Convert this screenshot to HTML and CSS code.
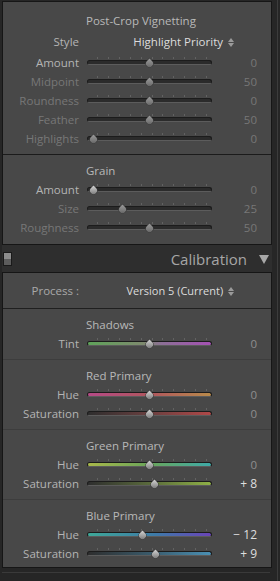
FILE: index.html
```html
<!DOCTYPE html>
<html lang="en">
<head>
    <meta charset="UTF-8">
    <meta name="viewport" content="width=device-width, initial-scale=1.0">
    <title>Develop - Effects / Calibration</title>
    <link rel="stylesheet" href="styles.css">
</head>
<body>
<div class="app">
    <div class="main">
        <div class="panel">
            <div class="group first">
                <div class="title">Post-Crop Vignetting</div>
                <div class="row pick">
                    <span class="label">Style</span>
                    <span class="choice">Highlight Priority
                        <svg class="updown" width="6" height="9" viewBox="0 0 6 9"><path d="M0 4 L3 0 L6 4 Z M0 5 L3 9 L6 5 Z"/></svg>
                    </span>
                </div>
                <div class="row">
                    <span class="label">Amount</span>
                    <div class="slider"><i class="thumb dim" style="left: 50%"></i></div>
                    <span class="value dim">0</span>
                </div>
                <div class="row">
                    <span class="label dim">Midpoint</span>
                    <div class="slider"><i class="thumb dim" style="left: 50%"></i></div>
                    <span class="value dim">50</span>
                </div>
                <div class="row">
                    <span class="label dim">Roundness</span>
                    <div class="slider"><i class="thumb dim" style="left: 50%"></i></div>
                    <span class="value dim">0</span>
                </div>
                <div class="row">
                    <span class="label dim">Feather</span>
                    <div class="slider"><i class="thumb dim" style="left: 50%"></i></div>
                    <span class="value dim">50</span>
                </div>
                <div class="row">
                    <span class="label dim">Highlights</span>
                    <div class="slider"><i class="thumb dim" style="left: 5%"></i></div>
                    <span class="value dim">0</span>
                </div>
            </div>
            <div class="group grain">
                <div class="title">Grain</div>
                <div class="row">
                    <span class="label">Amount</span>
                    <div class="slider"><i class="thumb" style="left: 5%"></i></div>
                    <span class="value dim">0</span>
                </div>
                <div class="row">
                    <span class="label dim">Size</span>
                    <div class="slider"><i class="thumb dim" style="left: 28.5%"></i></div>
                    <span class="value dim">25</span>
                </div>
                <div class="row">
                    <span class="label dim">Roughness</span>
                    <div class="slider"><i class="thumb dim" style="left: 50%"></i></div>
                    <span class="value dim">50</span>
                </div>
            </div>
        </div>

        <div class="header">
            <span class="toggle"></span>
            <span class="header-title">Calibration</span>
            <svg class="caret" width="10" height="9" viewBox="0 0 10 9"><path d="M0 0 L10 0 L5 9 Z"/></svg>
        </div>

        <div class="panel">
            <div class="process">
                <span class="label">Process :</span>
                <span class="choice">Version 5 (Current)
                    <svg class="updown" width="6" height="9" viewBox="0 0 6 9"><path d="M0 4 L3 0 L6 4 Z M0 5 L3 9 L6 5 Z"/></svg>
                </span>
            </div>
            <div class="group soft">
                <div class="title">Shadows</div>
                <div class="row">
                    <span class="label">Tint</span>
                    <div class="slider tint"><i class="thumb" style="left: 50%"></i></div>
                    <span class="value">0</span>
                </div>
            </div>
            <div class="group soft">
                <div class="title">Red Primary</div>
                <div class="row">
                    <span class="label">Hue</span>
                    <div class="slider red-hue"><i class="thumb" style="left: 50%"></i></div>
                    <span class="value">0</span>
                </div>
                <div class="row">
                    <span class="label">Saturation</span>
                    <div class="slider red-sat"><i class="thumb" style="left: 50%"></i></div>
                    <span class="value">0</span>
                </div>
            </div>
            <div class="group soft">
                <div class="title">Green Primary</div>
                <div class="row">
                    <span class="label">Hue</span>
                    <div class="slider green-hue"><i class="thumb" style="left: 50%"></i></div>
                    <span class="value">0</span>
                </div>
                <div class="row">
                    <span class="label">Saturation</span>
                    <div class="slider green-sat"><i class="thumb" style="left: 54%"></i></div>
                    <span class="value set">+ 8</span>
                </div>
            </div>
            <div class="group soft last">
                <div class="title">Blue Primary</div>
                <div class="row">
                    <span class="label">Hue</span>
                    <div class="slider blue-hue"><i class="thumb" style="left: 44%"></i></div>
                    <span class="value set">&minus; 12</span>
                </div>
                <div class="row">
                    <span class="label">Saturation</span>
                    <div class="slider blue-sat"><i class="thumb" style="left: 54.5%"></i></div>
                    <span class="value set">+ 9</span>
                </div>
            </div>
        </div>
        <div class="foot"></div>
    </div>
    <div class="strip"></div>
</div>
</body>
</html>
```

FILE: styles.css
```css
body {
    margin: 0;
    background-color: #262626;
    font-family: "Open Sans", "Noto Sans", sans-serif;
    font-size: 11.5px;
    color: #b4b4b4;
}
.app {
    display: flex;
    height: 581px;
}
.main {
    width: 272px;
    padding: 1px 0 0 2px;
    box-sizing: border-box;
}
.strip {
    width: 8px;
    position: relative;
}
.strip::after {
    content: "";
    position: absolute;
    top: 0;
    bottom: 0;
    left: 5px;
    width: 1px;
    background-color: #3c3c3c;
}
.panel {
    background-color: #484848;
    border: 1px solid #161616;
}
.group {
    padding: 6px 0 6px;
}
.group.first {
    padding: 9px 0 6px;
}
.group.grain {
    padding: 6px 0 7px;
}
.group + .group {
    border-top: 1px solid #1b1b1b;
}
.group.soft {
    border-top: 1px solid #3d3d3d;
}
.process + .group.soft {
    border-top: 1px solid #1f1f1f;
}
.group.last {
    padding-bottom: 4px;
}
.title {
    height: 19px;
    line-height: 19px;
    padding-left: 83px;
    color: #b8b8b8;
}
.row {
    display: flex;
    align-items: center;
    height: 19px;
}
.row.pick {
    height: 23px;
}
.label {
    width: 76px;
    text-align: right;
    flex-shrink: 0;
    color: #b4b4b4;
}
.dim {
    color: #777777;
}
.value {
    width: 45px;
    text-align: right;
    color: #8e8e8e;
}
.value.dim {
    color: #777777;
}
.value.set {
    color: #dedede;
    font-size: 12px;
}
.choice {
    width: 155px;
    text-align: right;
    color: #dcdcdc;
}
.updown {
    fill: #9a9a9a;
    margin-left: 2px;
    vertical-align: -1px;
}
.process {
    display: flex;
    align-items: center;
    height: 35px;
}
.process .label {
    color: #a8a8a8;
}
.process .choice {
    font-size: 11px;
}

/* sliders */
.slider {
    position: relative;
    width: 125px;
    height: 19px;
    margin-left: 8px;
    --track: #2b2b2b;
}
.slider::before {
    content: "";
    position: absolute;
    left: 0;
    right: 0;
    top: 7px;
    height: 3px;
    border: 1px solid #1c1c1c;
    border-bottom-color: #5c5c5c;
    border-radius: 3px;
    background: var(--track);
}
.slider::after {
    content: "";
    position: absolute;
    left: 10px;
    width: 110px;
    top: 4px;
    height: 2px;
    background: repeating-linear-gradient(to right, #626262 0 1px, transparent 1px 10.9px);
}
.thumb {
    position: absolute;
    top: 7px;
    width: 7px;
    height: 7px;
    margin-left: -3.5px;
    border-radius: 0 50% 50% 50%;
    transform: rotate(45deg);
    background: linear-gradient(135deg, #d4d4d4, #9a9a9a 60%, #6e6e6e);
    box-shadow: 0 0 0 0.5px #333;
    z-index: 1;
}
.thumb.dim {
    background: linear-gradient(135deg, #9a9a9a, #7a7a7a 60%, #5a5a5a);
}
.tint { --track: linear-gradient(to right, #5fa35a, #7e8a6e 45%, #8c6f96 60%, #a551b4); }
.red-hue { --track: linear-gradient(to right, #b54a86, #b0565e 50%, #b88a4a); }
.red-sat { --track: linear-gradient(to right, #2e2e2e, #6a4040 50%, #b04848); }
.green-hue { --track: linear-gradient(to right, #a8b84a, #6aa55a 50%, #3eaaa8); }
.green-sat { --track: linear-gradient(to right, #2e2e2e, #5a6a3c 50%, #8eb046); }
.blue-hue { --track: linear-gradient(to right, #3ea898, #3e7aa8 55%, #6a44b8); }
.blue-sat { --track: linear-gradient(to right, #2e2e2e, #3a5a6a 50%, #4a90b4); }

/* calibration header */
.header {
    display: flex;
    align-items: center;
    height: 27px;
    background-color: #2e2e2e;
}
.toggle {
    width: 7px;
    height: 12px;
    margin-left: 1px;
    border: 1px solid #1a1a1a;
    background: linear-gradient(to bottom, #8c8c8c 50%, #5c5c5c 50%);
}
.header-title {
    margin-left: auto;
    font-size: 15px;
    color: #a6a6a6;
}
.caret {
    fill: #a8a8a8;
    margin: 1px 3px 0 12px;
}
.foot {
    height: 4px;
    border-bottom: 1px solid #3a3a3a;
    margin-right: 2px;
}
```
